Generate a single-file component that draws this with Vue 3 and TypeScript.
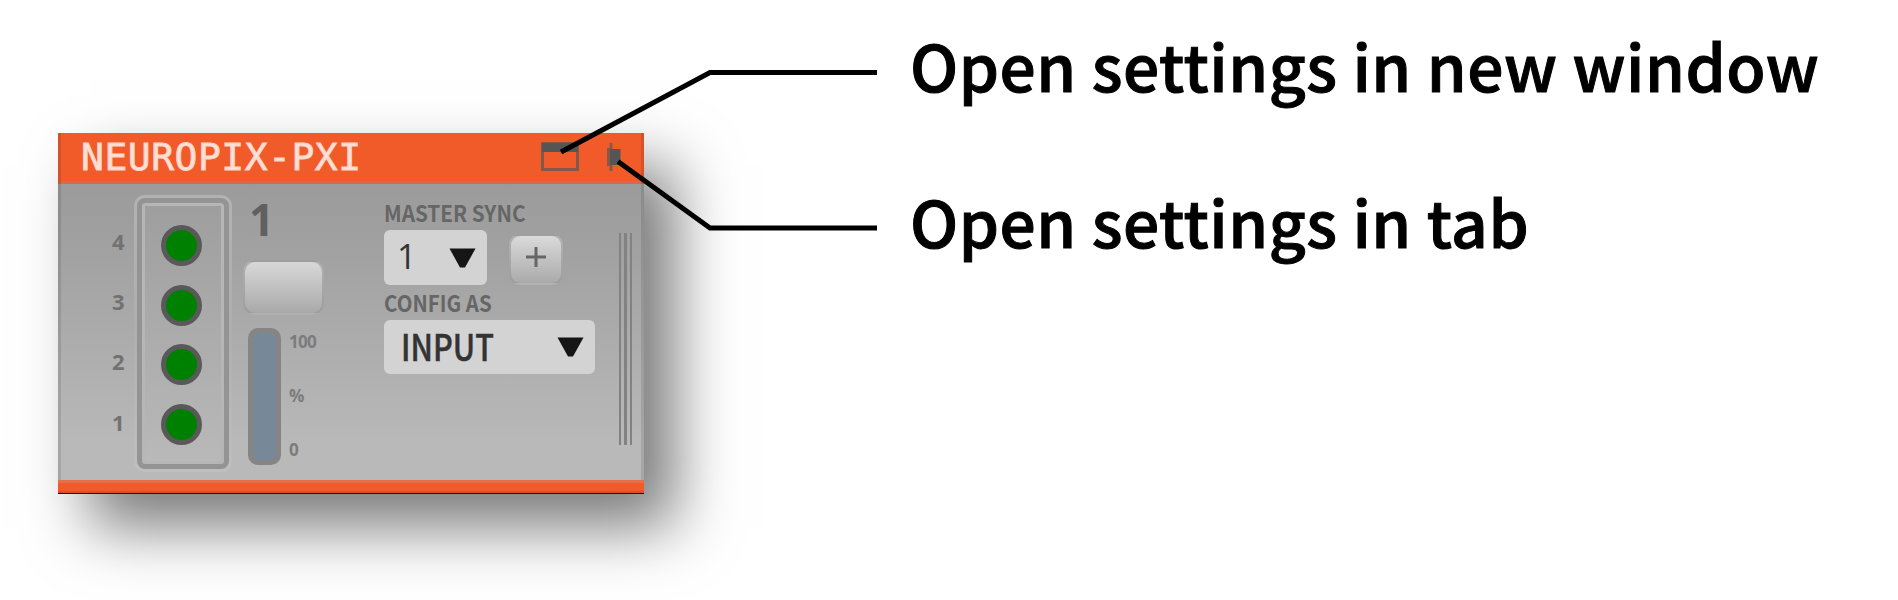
<script setup lang="ts">
const ports: number[] = [4, 3, 2, 1]
const callouts: string[] = ['Open settings in new window', 'Open settings in tab']
</script>

<template>
  <main class="figure">
    <section class="plugin">
      <header class="titlebar">
        <span class="title">NEUROPIX-PXI</span>
        <svg class="win-icon" width="40" height="31" viewBox="0 0 40 31">
          <rect x="2.5" y="2.5" width="35" height="26" fill="none" stroke="#85594a" stroke-width="3" />
          <rect x="2" y="2" width="36" height="9" fill="#555" />
        </svg>
        <svg class="tab-icon" width="14" height="30" viewBox="0 0 14 30">
          <rect x="0" y="6" width="4" height="18" fill="#85594a" />
          <rect x="2.5" y="1" width="3" height="28" fill="#85594a" />
          <rect x="3" y="7" width="10.5" height="16" fill="#555" />
        </svg>
      </header>
      <div class="body">
        <div class="port-labels">
          <span v-for="p in ports" :key="p">{{ p }}</span>
        </div>
        <div class="frame">
          <div class="frame-inner">
            <i v-for="p in ports" :key="p" class="led"></i>
          </div>
        </div>
        <div class="probe">
          <div class="probe-num">1</div>
          <button class="probe-btn" type="button"></button>
          <div class="fifo">
            <div class="meter"></div>
            <div class="scale"><span>100</span><span>%</span><span>0</span></div>
          </div>
        </div>
        <div class="settings">
          <div class="label"><span class="sync">MASTER SYNC</span></div>
          <div class="row">
            <div class="select small">
              <span class="sync-value">1</span>
              <svg width="27" height="20" viewBox="0 0 27 20"><path d="M0.5 0.5H26.500L16 19.500H11Z" fill="#151515" /></svg>
            </div>
            <button class="add" type="button">
              <svg width="22" height="22" viewBox="0 0 22 22"><path d="M11 1V21M1 11H21" stroke="#666" stroke-width="3" /></svg>
            </button>
          </div>
          <div class="label second"><span class="config">CONFIG AS</span></div>
          <div class="select">
            <span class="input-text">INPUT</span>
            <svg width="27" height="20" viewBox="0 0 27 20"><path d="M0.5 0.5H26.500L16 19.500H11Z" fill="#151515" /></svg>
          </div>
        </div>
        <div class="grip"><i></i><i></i><i></i></div>
      </div>
      <footer class="bottom"></footer>
    </section>
    <div class="callouts">
      <p v-for="c in callouts" :key="c">{{ c }}</p>
    </div>
    <svg class="leaders" width="1898" height="600" viewBox="0 0 1898 600">
      <g fill="none" stroke="#000" stroke-width="5">
        <path d="M561 152L710 72.500H877" />
        <path d="M618 161.500L710 228H877" />
      </g>
    </svg>
  </main>
</template>

<style>
body { margin: 0; background: #fff; }
</style>

<style scoped>
.figure {
  position: relative;
  display: flex;
  box-sizing: border-box;
  width: 1898px;
  height: 600px;
  padding-left: 58px;
  overflow: hidden;
  background: #fff;
}
.plugin {
  flex: none;
  display: flex;
  flex-direction: column;
  width: 586px;
  height: 361px;
  margin-top: 133px;
  box-shadow: 31px 33px 58px 0 rgba(0, 0, 0, 0.52);
  font-family: "Noto Sans CJK JP", "Noto Sans", sans-serif;
}
.titlebar {
  display: flex;
  box-sizing: border-box;
  height: 51px;
  padding: 8px 20px 0 20px;
  background: #f15b2a;
  border: solid #d65125;
  border-width: 0 3px 0 3px;
  box-shadow: inset 0 -3px #d46b4b;
}
.title {
  flex: none;
  width: 459px;
  margin-top: -3px;
  font: 38px/38px "DejaVu Sans Mono", monospace;
  letter-spacing: 0.5px;
  color: #fde0d6;
  -webkit-text-stroke: 0.9px #fcd3c6;
}
.win-icon { flex: none; }
.tab-icon { flex: none; margin: 1px 0 0 27px; }
.body {
  display: flex;
  box-sizing: border-box;
  height: 296px;
  border: solid rgba(0, 0, 0, 0.1);
  border-width: 0 3px;
  background: linear-gradient(#9b9b9b, #a2a2a2 25%, #b9b9b9 88%, #b9b9b9) border-box;
}
.port-labels {
  display: flex;
  flex-direction: column;
  width: 73px;
  padding-top: 27px;
}
.port-labels span {
  height: 60.200px;
  padding-left: 51px;
  font: 700 22px/60px "Open Sans", sans-serif;
  color: #727272;
}
.frame {
  flex: none;
  box-sizing: border-box;
  width: 98px;
  height: 277px;
  margin-top: 11px;
  padding: 3px;
  border-radius: 11px;
  background: linear-gradient(#b2b2b2, #afafaf 50%, #bfbfbf);
}
.frame-inner {
  display: flex;
  flex-direction: column;
  align-items: center;
  gap: 18.700px;
  box-sizing: border-box;
  height: 271px;
  padding: 22px 3px 0 0;
  border: 5px solid #949494;
  border-radius: 8px;
  background: linear-gradient(#9e9e9e, #b9b9b9);
  box-shadow: inset 0 0 0 3px #b6b6b6;
}
.led {
  box-sizing: border-box;
  width: 41px;
  height: 41px;
  border: 5px solid #595959;
  border-radius: 50%;
  background: #008000;
}
.probe { flex: none; width: 141px; margin-left: 11px; }
.probe-num {
  height: 76px;
  padding-left: 6px;
  font: 700 44px/70px "Open Sans", sans-serif;
  color: #606060;
}
.probe-btn {
  display: block;
  box-sizing: border-box;
  width: 81px;
  height: 55px;
  padding: 0;
  border: 2px solid rgba(150, 150, 150, 0.6);
  border-radius: 12px;
  background: linear-gradient(#d8d8d8, #a9a9a9);
}
.fifo { display: flex; margin: 13px 0 0 5px; }
.meter {
  box-sizing: border-box;
  width: 33px;
  height: 137px;
  border: 5px solid #858585;
  border-radius: 10px;
  background: #778899;
}
.scale {
  display: flex;
  flex-direction: column;
  gap: 34px;
  padding: 3px 0 0 8px;
  font: 700 18px/20px "Open Sans", sans-serif;
  letter-spacing: -0.8px;
  color: #7c7c7c;
}
.scale span { transform: scaleX(0.95); transform-origin: 0 50%; }
.settings { flex: none; width: 211px; }
.label {
  height: 46px;
  font: 700 23px/56px "Noto Sans CJK JP", sans-serif;
  color: #666;
}
.label span { display: inline-block; transform-origin: 0 50%; white-space: nowrap; }
.row { display: flex; align-items: flex-end; gap: 22px; height: 55px; }
.select {
  display: flex;
  align-items: center;
  justify-content: space-between;
  box-sizing: border-box;
  height: 54px;
  padding: 0 11px 0 17px;
  border-radius: 6px;
  background: #d3d3d3;
  color: #333;
  font-size: 36px;
  font-weight: 500;
  line-height: 50px;
}
.select.small { width: 103px; height: 55px; padding-left: 13px; }
.select span { display: inline-block; height: 54px; transform-origin: 0 50%; }
.select .sync-value { font: 500 34px/50px "Open Sans", sans-serif; }
.input-text { transform: scaleX(0.85); -webkit-text-stroke: 0.5px #333; }
.add {
  display: flex;
  align-items: center;
  justify-content: center;
  box-sizing: border-box;
  width: 54px;
  height: 51px;
  padding: 0 0 5px;
  border: 2px solid rgba(150, 150, 150, 0.6);
  border-radius: 11px;
  background: linear-gradient(#dadada, #aaa);
}
.label.second { height: 35px; line-height: 34px; }
.sync { transform: scaleX(0.9); }
.config { transform: scaleX(0.89); }
.grip { display: flex; gap: 3px; height: 212px; margin: 49px 0 0 24px; }
.grip i { width: 2.300px; background: #828282; }
.bottom {
  height: 14px;
  background: linear-gradient(#e37049 0 3px, #f15b2a 3px 11px, #d65125 11px 13px, #151010 13px);
}
.callouts { margin: 24px 0 0 266px; }
.callouts p {
  margin: 0 0 76px;
  font: 500 64px/80px "Noto Sans CJK JP", sans-serif;
  letter-spacing: 0.520px;
  -webkit-text-stroke: 1px #000;
  white-space: nowrap;
  color: #000;
}
.leaders { position: absolute; inset: 0; }
</style>
